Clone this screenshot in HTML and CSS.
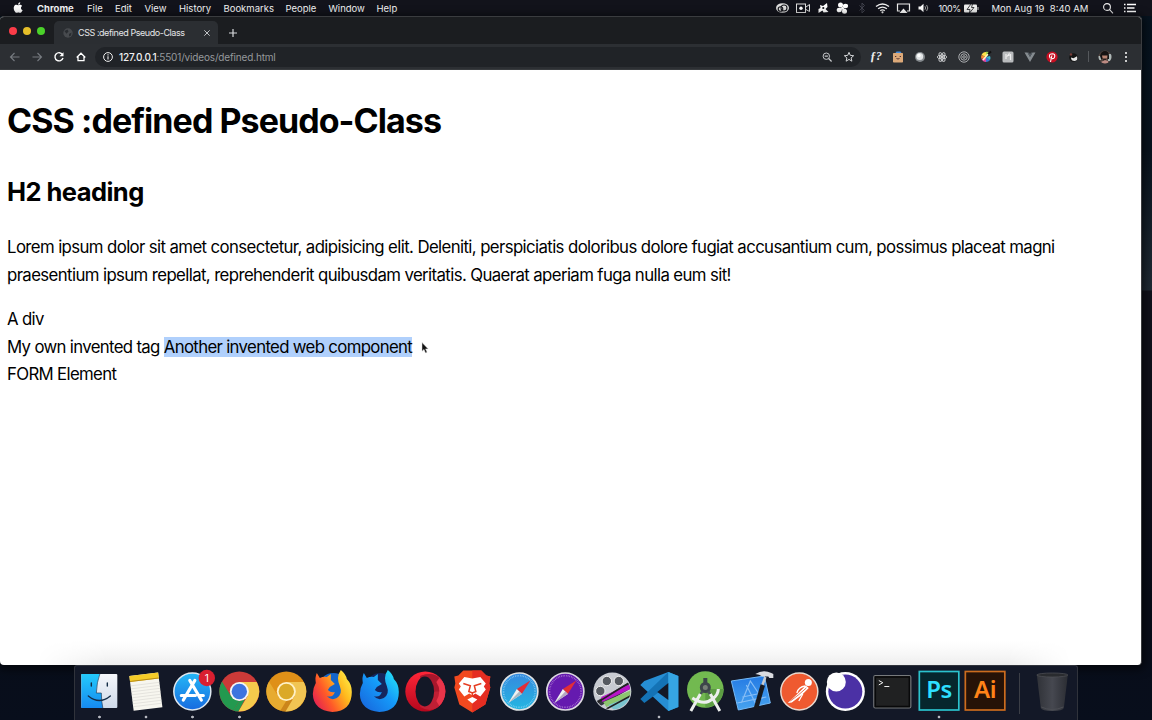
FILE: index.html
```html
<!DOCTYPE html>
<html lang="en">
<head>
<meta charset="utf-8">
<title>CSS :defined Pseudo-Class</title>
<link rel="stylesheet" href="styles.css">
</head>
<body>
<div class="desktop">
  <header class="menubar">
    <svg class="apple" viewBox="0 0 24 24"><path fill="#fff" d="M16.5 12.700c0-2.400 2-3.600 2.100-3.700-1.200-1.700-3-1.900-3.600-1.900-1.500-.2-3 .9-3.700.9-.8 0-2-.9-3.200-.9C6.400 7.100 4.800 8.100 4 9.500c-1.800 3-.5 7.500 1.300 9.900.8 1.200 1.800 2.600 3.200 2.500 1.300 0 1.700-.8 3.300-.8 1.500 0 1.900.8 3.300.8s2.300-1.200 3.100-2.400c1-1.400 1.400-2.700 1.400-2.800-.1 0-3.100-1.200-3.100-4zM14.200 5.500c.7-.9 1.100-2 1-3.200-1 .1-2.200.7-2.900 1.500-.6.700-1.200 1.900-1 3 1.100.1 2.200-.5 2.900-1.300z"/></svg>
    <nav class="menus"><b>Chrome</b><span>File</span><span>Edit</span><span>View</span><span>History</span><span>Bookmarks</span><span>People</span><span>Window</span><span>Help</span></nav>
    <div class="status">
      <svg viewBox="0 0 16 14" class="w21"><ellipse cx="8" cy="7" rx="6.500" ry="4.800" fill="#ddd"/><g fill="none" stroke="#15161c" stroke-width="1.100"><circle cx="6" cy="8" r="2.300"/><circle cx="9.500" cy="7" r="3"/></g></svg>
      <svg viewBox="0 0 16 14" class="w20"><g fill="none" stroke="#ddd"><rect x="1.500" y="3" width="9" height="8.500"/><path d="M11 6l3.500-2.500v7L11 8.500"/></g><circle cx="6" cy="7.200" r="1.700" fill="#fff"/></svg>
      <svg viewBox="0 0 16 14" class="w20"><path fill="#fff" d="M5 4l3 1 4-3 .5 4-2 2 3 3-5 .5-1-2-4 2.500V8l2-1z"/><circle cx="8.300" cy="7" r="1.100" fill="#15161c"/></svg>
      <svg viewBox="0 0 16 14" class="w19"><g fill="#fff"><ellipse cx="6" cy="4" rx="2.500" ry="2.500"/><ellipse cx="11" cy="5" rx="2.600" ry="2.300"/><ellipse cx="4.800" cy="9" rx="2.600" ry="2.300"/><ellipse cx="10" cy="10.200" rx="2.500" ry="2.500"/><circle cx="8" cy="7.200" r="1.500"/></g></svg>
      <svg viewBox="0 0 16 14" class="w20"><path d="M5.500 4.500l5 5L8 12V2l2.500 2.500-5 5" stroke="#41434d" fill="none"/></svg>
      <svg viewBox="0 0 16 14" class="w21"><g fill="none" stroke="#eee" stroke-width="1.300"><path d="M1.500 5.500q6.500-5 13 0M3.600 7.700q4.400-3.300 8.800 0M5.700 9.700q2.300-1.700 4.600 0"/></g><circle cx="8" cy="11.300" r="1.100" fill="#eee"/></svg>
      <svg viewBox="0 0 16 14" class="w21"><path d="M4.500 10H2V3h12v7h-2.500" fill="none" stroke="#eee" stroke-width="1.200"/><path d="M8 7.500l4 4.500H4z" fill="#fff"/></svg>
      <svg viewBox="0 0 16 14" class="w20"><path d="M2.500 5.500h2l3-2.800v8.600l-3-2.800h-2z" fill="#fff"/><path d="M9 5.300q1.300 1.700 0 3.400M10.600 4q2.400 3 0 6" fill="none" stroke="#aaa" stroke-width=".9"/></svg>
      <span class="percent">100%</span>
      <svg viewBox="0 0 18 14" class="battery"><rect x="2" y="3.500" width="13" height="8" rx="1" fill="#eee"/><path d="M16 6v3" stroke="#ccc"/><path d="M9 3L5 8.500h3L7.500 12 12 6.500H9.500L10.500 3z" fill="#eee" stroke="#15161c" stroke-width=".8"/></svg>
      <span class="date">Mon Aug 19&nbsp; 8:40 AM</span>
      <svg viewBox="0 0 16 14" class="find"><g fill="none" stroke="#eee" stroke-width="1.100"><circle cx="7" cy="6" r="3.400"/><path d="M9.500 8.500l3.500 3.800"/></g></svg>
      <svg viewBox="0 0 16 14" class="list"><path d="M5 3.500h9M5 7h7.500M5 10.500h9" stroke="#fff" stroke-width="1.400"/><path d="M2 3.500h1.500M2 7h1.500M2 10.500h1.500" stroke="#fff" stroke-width="1.400"/></svg>
    </div>
  </header>

  <main class="window">
    <div class="tabstrip">
      <div class="lights"><i class="red"></i><i class="yellow"></i><i class="green"></i></div>
      <div class="tab">
        <svg class="globe" viewBox="0 0 12 12"><circle cx="6" cy="6" r="4.700" fill="#474a4e"/><path d="M2.500 4l3-1.500 1 2-2 2.300zM7 7l2.500-1.500-.5 3-2 1z" fill="#292c30"/></svg>
        <span>CSS :defined Pseudo-Class</span>
        <svg class="close" viewBox="0 0 10 10"><path d="M2.300 2.300l5.400 5.400M7.700 2.300L2.300 7.700" stroke="#d4d6d8" stroke-width=".9"/></svg>
      </div>
      <svg class="plus" viewBox="0 0 12 12"><path d="M6 2v8M2 6h8" stroke="#d8dadc" stroke-width="1.200"/></svg>
    </div>
    <div class="toolbar">
      <div class="navs">
        <svg viewBox="0 0 22 20"><path d="M19.500 10h-9M14.500 6l-4 4 4 4" fill="none" stroke="#777b80" stroke-width="1.100"/></svg>
        <svg viewBox="0 0 22 20"><path d="M10.500 10h9M15.500 6l4 4-4 4" fill="none" stroke="#777b80" stroke-width="1.100"/></svg>
        <svg viewBox="0 0 22 20"><path d="M18.500 7.500A4.100 4.100 0 1 0 19 11" fill="none" stroke="#fff" stroke-width="1.400"/><path d="M19.500 5.200v4h-4z" fill="#fff"/></svg>
        <svg viewBox="0 0 22 20"><path d="M10.700 10.500l4.300-4.300 4.300 4.300M12 9.500v4.200h6V9.500" fill="none" stroke="#fff" stroke-width="1.300"/></svg>
      </div>
      <div class="address">
        <svg class="info" viewBox="0 0 12 12"><circle cx="6" cy="6" r="4.400" fill="none" stroke="#eee"/><path d="M6 5.300v3.200M6 3.300v1.200" stroke="#eee" stroke-width="1.100"/></svg>
        <p class="url"><b>127.0.0.1</b>:5501/videos/defined.html</p>
        <svg class="tool" viewBox="0 0 22 20"><g fill="none" stroke="#c4c6c9"><circle cx="10.300" cy="9.200" r="3.200"/><path d="M12.600 11.500l3 3M8.700 9.200h3.200" stroke-width="1.200"/></g></svg>
        <svg class="tool" viewBox="0 0 22 20"><path d="M11 5.300l1.300 3.100 3.400.3-2.600 2.200.8 3.300-2.900-1.800-2.900 1.800.8-3.300-2.600-2.200 3.400-.3z" fill="none" stroke="#d0d2d4"/></svg>
      </div>
      <div class="extensions">
        <span class="fq">ƒ?</span>
        <svg viewBox="0 0 22 20"><rect x="6" y="6" width="10" height="9.500" rx=".8" fill="#dca979"/><path d="M8.500 6l1-1.600h4l1 1.600z" fill="#428bdb"/><path d="M8 9.500h1.300M12.700 9.500H14M9.500 11.500q1.500 1 3 0" stroke="#533" fill="none"/></svg>
        <svg viewBox="0 0 22 20"><circle cx="11" cy="10" r="5" fill="#84898d"/><circle cx="10.700" cy="9.600" r="3.500" fill="#e1e4e6"/><circle cx="10" cy="8.500" r="1.700" fill="#fff"/></svg>
        <svg viewBox="0 0 22 20"><g fill="none" stroke="#cfd1d3" stroke-width=".9"><ellipse cx="11" cy="10" rx="4.800" ry="1.900"/><ellipse cx="11" cy="10" rx="4.800" ry="1.900" transform="rotate(60 11 10)"/><ellipse cx="11" cy="10" rx="4.800" ry="1.900" transform="rotate(120 11 10)"/></g><circle cx="11" cy="10" r="1" fill="#fff"/></svg>
        <svg viewBox="0 0 22 20"><g fill="none" stroke="#b7b9bb" stroke-width=".9"><circle cx="11" cy="10" r="5.200"/><circle cx="11" cy="10" r="3.200"/><circle cx="11" cy="10" r="1.300"/></g></svg>
        <svg viewBox="0 0 22 20"><path d="M11 10V5a5 5 0 0 0-4.500 3z" fill="#ffe14b"/><path d="M11 10L6.500 8a5 5 0 0 0 0 4z" fill="#f68a30"/><path d="M11 10l-4.500 2a5 5 0 0 0 4.500 3z" fill="#df45a4"/><path d="M11 10v5a5 5 0 0 0 4-2z" fill="#357ad7"/><path d="M11 10l4 3q1-2 0-4z" fill="#3bb8d2"/><path d="M11 10l3-5-3-.2z" fill="#a5dc4b"/><path d="M8 13l5-6" stroke="#fff6c0" stroke-width="1.600"/><path d="M13 7l3-2.500" stroke="#111" stroke-width="2"/></svg>
        <svg viewBox="0 0 22 20"><rect x="5.500" y="4.500" width="11" height="11" rx="1.500" fill="#b9bbbd"/><path d="M9 7v5M10 9.500l2-2.500v2M13.500 7v6" stroke="#eee" fill="none" stroke-width="1.200"/></svg>
        <svg viewBox="0 0 22 20"><path d="M5.500 5.500L11 15l5.500-9.500h-3L11 9.700 8.500 5.500z" fill="#858b90"/><path d="M8.300 5.500L11 10l2.700-4.500h-1.600L11 7.300 9.900 5.500z" fill="#535a61"/></svg>
        <svg viewBox="0 0 22 20"><circle cx="11" cy="10" r="5.600" fill="#c80f22"/><path d="M10.900 8.500L9.500 15M9.200 11.200q-2.300-4.200 2-4.500 3 .1 2.500 2.900-.7 2.600-2.700 1.900" fill="none" stroke="#fff" stroke-width="1.100"/></svg>
        <svg viewBox="0 0 22 20"><circle cx="10.500" cy="10.500" r="4.300" fill="#141414"/><path d="M8 10.500l2.500.8 3.500-2q1.200 4.500-2.300 4.700-3.700 0-3.700-3.500z" fill="#e4e4e4"/><circle cx="8" cy="7.500" r="1.200" fill="#783b36"/></svg>
      </div>
      <i class="separator"></i>
      <svg class="avatar" viewBox="0 0 14 14"><defs><clipPath id="face"><circle cx="7" cy="7" r="6.500"/></clipPath></defs><g clip-path="url(#face)"><path fill="#51443f" d="M0 0h14v14H0z"/><path fill="#adb8b8" d="M10 4h4v7h-4zM0 6h3v4H0z"/><path fill="#161313" d="M2 6q1-5 5-5 4 0 4 5v3H3z"/><path fill="#b98472" d="M4 5.500h5.500L9 10H5z"/><path fill="#2b201e" d="M4.500 8.500H9l-1 2.500H5.500z"/><path fill="#bd8b83" d="M3 12l4-2 3 1 1 3H3z"/></g></svg>
      <svg class="dots" viewBox="0 0 6 14"><g fill="#f2f2f2"><circle cx="3" cy="3" r="1.100"/><circle cx="3" cy="7" r="1.100"/><circle cx="3" cy="11" r="1.100"/></g></svg>
    </div>
    <article class="page">
      <h1>CSS :defined Pseudo-Class</h1>
      <h2>H2 heading</h2>
      <p class="lorem">Lorem ipsum dolor sit amet consectetur, adipisicing elit. Deleniti, perspiciatis doloribus dolore fugiat accusantium cum, possimus placeat magni<br>praesentium ipsum repellat, reprehenderit quibusdam veritatis. Quaerat aperiam fuga nulla eum sit!</p>
      <div>A div</div>
      <div class="invented">My own invented tag <mark>Another invented web component</mark><svg class="cursor" viewBox="0 0 8 12"><path d="M1 .5v8.700l2-1.800L4.500 11l1.600-.7-1.500-3.400h2.600z" fill="#111" stroke="#ddd" stroke-width=".5"/></svg></div>
      <div>FORM Element</div>
      <div class="shade"></div>
    </article>
  </main>

  <footer class="dock">
    <svg class="running" viewBox="0 0 46 54"><defs><linearGradient id="fl" x2="0" y2="1"><stop stop-color="#24cafb"/><stop offset="1" stop-color="#168af0"/></linearGradient><linearGradient id="fr" x2="0" y2="1"><stop stop-color="#f5f7fb"/><stop offset="1" stop-color="#cfdaea"/></linearGradient></defs><rect x="5" y="9" width="36" height="34" rx="1" fill="url(#fr)"/><path d="M5 9h18.500q-3 8-3.500 19h5q0 8 1.500 15H5z" fill="url(#fl)"/><g fill="none" stroke="#142c46" stroke-width="1.400" stroke-linecap="round"><path d="M15 18v3M31 18v3M12 31q11 9 22 0"/><path d="M23.500 9q-3 8-3.500 19h5q0 8 1.500 15" stroke-width=".6"/></g></svg>
    <svg class="running" viewBox="0 0 46 54"><g transform="rotate(-7 23 26)"><rect x="8" y="9" width="29" height="35" fill="#f7f6ef"/><path d="M8 9h29v6H8z" fill="#f5cc28"/><path d="M8 14.500h29" stroke="#b78b17"/><path d="M8 19h29M8 22h29M8 25h29M8 28h29M8 31h29M8 34h29M8 37h29M8 40h29" stroke="#d8d7d2" stroke-width=".6"/></g></svg>
    <svg class="running" viewBox="0 0 46 54"><defs><linearGradient id="as" x2="0" y2="1"><stop stop-color="#25b8f6"/><stop offset="1" stop-color="#176be0"/></linearGradient></defs><circle cx="23" cy="26.500" r="18.500" fill="url(#as)" stroke="#dfe8f0" stroke-width="1.500"/><g stroke="#fff" stroke-width="3.200" stroke-linecap="round"><path d="M20.500 15.500L32 35M25.500 15.500L14 35M12 30.500h14M30.500 30.500H34"/></g><circle cx="37.500" cy="13" r="8.200" fill="#d91f30"/><text x="37.500" y="16.700" text-anchor="middle" class="count">1</text></svg>
    <svg class="running" viewBox="0 0 46 54"><circle cx="23" cy="26.500" r="20" fill="#cb3a38"/><path fill="#23994f" d="M5.700 16.500L14.800 31.200l8.200 4.700-5.900 9.700A20 20 0 0 1 5.700 16.500z"/><path fill="#f6ca4c" d="M40.400 17H23l8.200 14.200L22 46.500A20 20 0 0 0 40.400 17z"/><path fill="#23994f" d="M17 45.600l6-9.700 5.500-1.500L22 46.500q-3 0-5-.9z"/><circle cx="23" cy="26.500" r="9.500" fill="#f5f5f5"/><circle cx="23" cy="26.500" r="7.700" fill="#3d73df"/></svg>
    <svg viewBox="0 0 46 54"><circle cx="23" cy="26.500" r="20" fill="#df9018"/><path fill="#e7ab30" d="M5.700 16.500L14.800 31.200l8.200 4.700-5.900 9.700A20 20 0 0 1 5.700 16.500z"/><path fill="#f1c553" d="M40.400 17H23l8.200 14.200L22 46.500A20 20 0 0 0 40.400 17z"/><path fill="#b7791d" d="M23 36l-5.900 9.700 5 1 7-12z" opacity=".5"/><circle cx="23" cy="26.500" r="9.500" fill="#fff1c7"/><circle cx="23" cy="26.500" r="7.700" fill="#dba928"/></svg>
    <svg viewBox="0 0 46 54"><defs><linearGradient id="fx" x1="1" x2="0" y1=".1" y2=".7"><stop stop-color="#fff44d"/><stop offset=".35" stop-color="#ffb91d"/><stop offset=".7" stop-color="#ff5a28"/><stop offset="1" stop-color="#e5254f"/></linearGradient></defs><circle cx="24" cy="23" r="15" fill="#1466cc"/><path fill="url(#fx)" d="M7.500 8l3 5q4-2 7-1l4-3v6l4 4-5 3-2 3q3 3 7 2-2 6-8 4 4 5 10 2 6-4 3-12-4-9 1-16 5 4 6 9 5 5 5 13 0 19-19.500 20Q4 45 3.500 29q0-6 3-11-1-6 1-10z"/></svg>
    <svg viewBox="0 0 46 54"><defs><linearGradient id="fd" x1="1" x2="0" y2="1"><stop stop-color="#27eff7"/><stop offset=".45" stop-color="#159af9"/><stop offset="1" stop-color="#1860d9"/></linearGradient></defs><circle cx="24" cy="23" r="15" fill="#15265e"/><path fill="url(#fd)" d="M7.500 8l3 5q4-2 7-1l4-3v6l4 4-5 3-2 3q3 3 7 2-2 6-8 4 4 5 10 2 6-4 3-12-4-9 1-16 5 4 6 9 5 5 5 13 0 19-19.500 20Q4 45 3.500 29q0-6 3-11-1-6 1-10z"/></svg>
    <svg viewBox="0 0 46 54"><defs><linearGradient id="op" x2="0" y2="1"><stop stop-color="#ff2638"/><stop offset="1" stop-color="#b5071d"/></linearGradient></defs><circle cx="23" cy="26.500" r="20" fill="url(#op)"/><path d="M18 11q12-5 19 2 6 6 6 13.500T36 42q-8 6-18 0z" fill="#c01f34"/><path d="M18 11q12-5 19 2 6 6 6 13.500H18z" fill="#a8172c"/><path d="M34 17q6 9 0 19l3 5q6-6 6-14.500T37 13z" fill="#ea354a"/><ellipse cx="22.500" cy="26.500" rx="9.300" ry="15" fill="#131827"/></svg>
    <svg viewBox="0 0 46 54"><path d="M14 5.500h18l5 5 4 1-1 7 1 4-5 17-13 8-13-8L5 22.500l1-4-1-7 4-1z" fill="#f2491f"/><path d="M23 5.500h9l5 5 4 1-1 7 1 4-5 17-13 8z" fill="#e52d22"/><path d="M15 12l8 1.500L31 12l5.500 6.500-2 3 2 3-5.500 7-5-3-3 2-3-2-5 3-5.500-7 2-3-2-3zM18 34.500l5-2.500 5 2.500-5 4z" fill="#fff"/><path d="M14 18.500l7 2.200-1.500 5.800 3.500 1.500 3.500-1.500-1.500-5.800 7-2.200M23 28v4" fill="none" stroke="#e63d22" stroke-width="1.500"/></svg>
    <svg viewBox="0 0 46 54"><defs><linearGradient id="sf" x2="0" y2="1"><stop stop-color="#3688df"/><stop offset="1" stop-color="#24b7e1"/></linearGradient></defs><circle cx="23" cy="26.500" r="18.500" fill="url(#sf)" stroke="#dee2e4" stroke-width="1.700"/><circle cx="23" cy="26.500" r="15.800" fill="none" stroke="#8ccff5" stroke-width="1.600" stroke-dasharray=".6 1.100"/><path d="M20.500 24L34 15.500 25.500 29z" fill="#e22d38"/><path d="M20.500 24l5 5L12 38z" fill="#f0f0f0"/><path d="M23 26.500l2.500 2.500L12 38z" fill="#aab9c3"/></svg>
    <svg viewBox="0 0 46 54"><circle cx="23" cy="26.500" r="18.500" fill="#651aaf" stroke="#ddd8e2" stroke-width="1.700"/><circle cx="23" cy="26.500" r="15.800" fill="none" stroke="#b98ad8" stroke-width="1.600" stroke-dasharray=".6 1.100"/><path d="M20.500 24L34 15.500 25.500 29z" fill="#e22d38"/><path d="M20.500 24l5 5L12 38z" fill="#f0f0f0"/><path d="M23 26.500l2.500 2.500L12 38z" fill="#b4a7c2"/></svg>
    <svg viewBox="0 0 46 54"><defs><clipPath id="reel"><circle cx="23" cy="26.500" r="18"/></clipPath></defs><circle cx="23" cy="26.500" r="19" fill="#c8cbd2"/><g clip-path="url(#reel)"><g fill="#565a61" stroke="#eee"><circle cx="17.500" cy="16" r="4.700"/><circle cx="29.500" cy="16" r="4.700"/><circle cx="11" cy="26" r="4.700"/></g><path d="M4 38l38-22v7L8 43z" fill="#353740"/><path d="M12 32l29-13v5L13 37z" fill="#b814c8"/><path d="M14 37l28-12v6L17 42z" fill="#8dc56f"/><path d="M19 40l23-9v8l-16 7z" fill="#7ac4cf"/><path d="M4 40l37-23M17 44L41 31" stroke="#222" stroke-width="1.500"/></g></svg>
    <svg class="running" viewBox="0 0 46 54"><path d="M32 7l10 4v31l-10 4L4 20l4-4z" fill="#268ed4"/><path d="M4 34l4 4L32 20V7z" fill="#1473b6"/><path d="M32 7l10 4v31l-10 4z" fill="#36a5e3"/><path d="M32 18v17L21 27z" fill="#131827"/></svg>
    <svg viewBox="0 0 46 54"><circle cx="23" cy="24.500" r="18.300" fill="#72b950"/><path d="M23 24h18.500q-2 17-18.500 18.500z" fill="#5c9d43"/><path d="M10 33q12 8 20 1 6-4 6-10M18 29L8.500 46M28 29l9.500 17" fill="none" stroke="#eceeed" stroke-width="3"/><rect x="21" y="13" width="4" height="6" fill="#3b4549"/><circle cx="23" cy="22.500" r="4" fill="#778077" stroke="#3d464a" stroke-width="3"/><path d="M20 26l-1.500 3M26 26l1.500 3" stroke="#465055" stroke-width="2.500"/></svg>
    <svg viewBox="0 0 46 54"><defs><linearGradient id="xc" x2="0" y2="1"><stop stop-color="#247ae4"/><stop offset="1" stop-color="#47a3ef"/></linearGradient></defs><path d="M2 16l33-5 6 27-32 7z" fill="url(#xc)" stroke="#75b9f5"/><path d="M12 38l9-22 12 18M13 32l20-4M17 20l10 20M8 38l29-6" fill="none" stroke="#86bdf5" stroke-width="1.200"/><path d="M36 12L32 23" stroke="#c7cbd0" stroke-width="2.500"/><path d="M33.500 20L26.500 44" stroke="#17191e" stroke-width="4.500"/><path d="M26 9q8-5 16-1l2 1v4h-4l-1-1.500h-6q-3-2.500-7-2.500z" fill="#d9dbe0"/></svg>
    <svg viewBox="0 0 46 54"><circle cx="23" cy="26.500" r="18.500" fill="#ef5a30" stroke="#ead9cf" stroke-width="1.500"/><circle cx="32" cy="17.500" r="3.500" fill="#fff"/><path d="M29.500 20.500l3 2.500-7 7-10 7.500-4 .5 9-8.500z" fill="#fff"/><path d="M29 21q-7 1-8.500 7M26.500 29l-4 7" fill="none" stroke="#fff" stroke-width="1.300"/><path d="M30 23l-8 7M14 36l8-6" stroke="#d8532e" stroke-width=".8"/></svg>
    <svg viewBox="0 0 46 54"><circle cx="23" cy="26.500" r="19.500" fill="#fff"/><circle cx="23" cy="26.500" r="17" fill="#4b31a5"/><circle cx="14" cy="17" r="9.500" fill="#fff"/></svg>
    <svg viewBox="0 0 46 54"><rect x="4.500" y="10.500" width="37" height="32.500" rx="1.500" fill="#202122" stroke="#777a7d" stroke-width="1.200"/><rect x="6" y="12" width="34" height="29.500" fill="none" stroke="#08090a" stroke-width="1.500"/><path d="M9.500 15.500l4 2.200-4 2.200M15 21.500h5" fill="none" stroke="#eee"/></svg>
    <svg class="running" viewBox="0 0 46 54"><rect x="3" y="6.500" width="39.500" height="38.500" fill="#06262d" stroke="#2bc2cd" stroke-width="1.700"/><text x="22.700" y="33" text-anchor="middle" class="ps">Ps</text></svg>
    <svg viewBox="0 0 46 54"><rect x="3" y="6.500" width="39.500" height="38.500" fill="#261207" stroke="#cc6c1e" stroke-width="1.700"/><text x="22.700" y="33" text-anchor="middle" class="ai">Ai</text></svg>
    <i class="divider"></i>
    <svg class="trash" viewBox="0 0 46 54"><defs><linearGradient id="bin"><stop stop-color="#303238"/><stop offset=".5" stop-color="#464850"/><stop offset="1" stop-color="#2b2d33"/></linearGradient></defs><path d="M7.500 10h31l-4 33q-1 3-11.500 3t-11.500-3z" fill="url(#bin)"/><ellipse cx="23" cy="10" rx="15.500" ry="2" fill="#292b2f" stroke="#505257" stroke-width=".7"/><path d="M12 42q11 5 22 0" fill="none" stroke="#4c4e54"/></svg>
  </footer>
</div>
</body>
</html>
```
FILE: styles.css
```css
* { box-sizing: border-box; }
body { margin: 0; overflow: hidden; font-family: Inter, "Liberation Sans", sans-serif; }
svg { display: block; flex: none; }
p { margin: 0; }

.desktop { width: 1152px; height: 720px; display: flex; flex-direction: column; background: linear-gradient(#06131f 0, #08131e 150px, #202b35 290px, #10111b 291px, #10111b 400px, #080d18 600px, #080e1c); }

.menubar { height: 16px; flex: none; display: flex; align-items: center; padding-bottom: 1px; background: #12131b; color: #f3f3f5; font-size: 9.500px; line-height: 15px; white-space: nowrap; }
.apple { width: 13px; height: 13px; margin-left: 12px; margin-right: 12px; }
.menus { display: grid; grid-template-columns: 50px 28px 29.500px 34.500px 44.500px 62px 43px 48px 60px; padding-top: 1px; }
.menus b { font-weight: 700; }
.status { display: flex; align-items: center; margin-left: 335px; }
.status svg { height: 14px; }
.w19 { width: 19px; } .w20 { width: 20px; } .w21 { width: 21px; }
.percent { width: 22px; margin-left: 5px; padding-top: 1px; font-size: 9px; letter-spacing: -.4px; }
.battery { width: 18px; margin-left: 1px; }
.date { width: 108px; margin-left: 12px; padding-top: 1px; }
.find { width: 16px; }
.list { width: 16px; margin-left: 6px; }

.window { width: 1142px; height: 649px; flex: none; display: flex; flex-direction: column; overflow: hidden; border-radius: 4px; background: #fff; border: 1px solid #3a3c3f; border-width: 1px 1px 0 0; box-shadow: 0 2px 8px 3px #0008; }
.tabstrip { height: 27px; flex: none; display: flex; align-items: flex-end; background: #1b1d20; }
.lights { display: flex; gap: 6px; padding: 0 10px 9.500px 9px; }
.lights i { width: 8px; height: 8px; border-radius: 50%; }
.red { background: #fb3c48; } .yellow { background: #e6bf29; } .green { background: #4bd22a; }
.tab { width: 164px; height: 23px; display: flex; align-items: center; margin-left: -1px; padding-left: 8px; border-radius: 5px 5px 0 0; background: #2b2e32; color: #e4e5e7; font-size: 9px; }
.tab span { width: 124px; margin-left: 4px; letter-spacing: -.44px; white-space: nowrap; }
.globe { width: 12px; height: 12px; }
.close { width: 10px; height: 10px; }
.plus { width: 12px; height: 12px; margin: 0 0 5px 9px; }
.toolbar { height: 26px; flex: none; display: flex; align-items: center; background: #2c2f33; border-bottom: 1px solid #383b3e; }
.navs { display: flex; padding-right: 7px; }
.navs svg { width: 22px; height: 20px; }
.address { width: 766px; height: 20px; display: flex; align-items: center; padding-left: 7px; padding-right: 1px; border-radius: 10px; background: #202327; }
.info { width: 12px; height: 12px; }
.url { flex: 1; margin-left: 5px; color: #96999c; font-size: 10px; letter-spacing: -.16px; }
.url b { color: #f0f1f2; font-weight: 500; }
.tool { width: 22px; height: 20px; }
.extensions { display: flex; margin-left: 4px; }
.extensions svg, .fq { width: 22px; height: 20px; }
.fq { color: #ededed; font: italic 700 12px/19px "Liberation Serif", serif; text-align: center; }
.separator { width: 1px; height: 11px; margin-left: 3px; background: #55585c; }
.avatar { width: 14px; height: 14px; margin-left: 9px; }
.dots { width: 6px; height: 14px; margin-left: 11px; }

.page { flex: 1; display: flex; flex-direction: column; padding: 0 7px; color: #000; font-size: 16.800px; line-height: 27.500px; letter-spacing: -.67px; }
.page h1 { margin: 24px 0 0; font-size: 34px; line-height: 54.400px; letter-spacing: -.94px; }
.page h2 { margin: 23px 0 0; font-size: 25.500px; line-height: 41px; letter-spacing: -.55px; }
.lorem { margin: 21.600px 0 17px; white-space: nowrap; letter-spacing: -.61px; }
.invented { display: flex; align-items: center; white-space: pre; }
mark { background: #b0d0fc; color: #000; line-height: 20px; }
.invented mark { margin-top: -1px; }
.cursor { width: 8px; height: 12px; margin-left: 9px; margin-top: 2px; }
.shade { height: 24px; margin: auto 63px 0 30px; background: linear-gradient(#fff, #f8f8f8 50%, #eee); -webkit-mask-image: linear-gradient(90deg, transparent, #000 70px, #000 970px, transparent); mask-image: linear-gradient(90deg, transparent, #000 70px, #000 970px, transparent); }

.dock { width: 1004px; height: 55px; margin-left: 74px; display: flex; padding-left: 1px; border: 1px solid #30333b; border-width: 1px 1px 0; border-radius: 3px 3px 0 0; background: #131827; }
.dock svg { width: 46.650px; height: 54px; margin-top: -1px; }
.running { background: radial-gradient(circle at 50% 52px, #b8bac2 1px, transparent 1.700px); }
.count { fill: #fff; font: 10px Inter, sans-serif; letter-spacing: 0; }
.ps, .ai { font: 600 24px "Noto Sans", sans-serif; letter-spacing: -.5px; }
.ps { fill: #2ddfff; } .ai { fill: #ff8318; }
.divider { width: 1px; height: 41px; margin: 7px 0 0 10px; background: #3b3e46; }
.dock .trash { margin-left: 9px; }
```
